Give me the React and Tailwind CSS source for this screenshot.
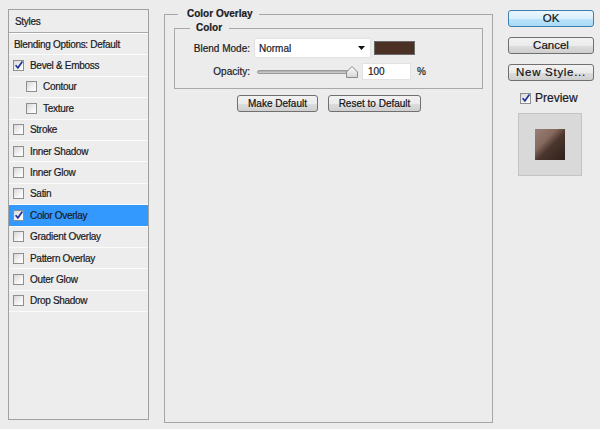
import React from "react";

const STYLE_ROWS = [
  { label: "Bevel & Emboss", checked: true },
  { label: "Contour", indent: true },
  { label: "Texture", indent: true },
  { label: "Stroke" },
  { label: "Inner Shadow" },
  { label: "Inner Glow" },
  { label: "Satin" },
  { label: "Color Overlay", checked: true, selected: true },
  { label: "Gradient Overlay" },
  { label: "Pattern Overlay" },
  { label: "Outer Glow" },
  { label: "Drop Shadow" },
];

function CheckBox({ checked }) {
  return (
    <span className="relative inline-block w-[11px] h-[11px] shrink-0 border border-[#8e8f8f] bg-[linear-gradient(135deg,#d6d6d6_0%,#f4f4f4_60%,#ffffff_100%)]">
      {checked && (
        <svg
          className="absolute left-[0px] top-[-1px]"
          width="10"
          height="10"
          viewBox="0 0 10 10"
        >
          <path
            d="M1.6 5.2 L3.9 7.8 L8.4 1.4"
            fill="none"
            stroke="#22349a"
            strokeWidth="1.7"
          />
        </svg>
      )}
    </span>
  );
}

function Button({ children, className = "", blue }) {
  return (
    <div
      className={
        "flex items-center justify-center rounded-[3px] border text-[#101010] " +
        (blue
          ? "border-[#3c7fb1] bg-[linear-gradient(#eaf6fd_0%,#d9f0fc_50%,#bee6fd_51%,#a7d9f5_100%)] "
          : "border-[#707070] bg-[linear-gradient(#f2f2f2_0%,#ebebeb_50%,#dddddd_51%,#cfcfcf_100%)] ") +
        className
      }
    >
      {children}
    </div>
  );
}

function StylesList() {
  return (
    <div className="ml-[8px] mt-[9px] w-[141px] h-[411px] border border-[#a0a0a0] bg-[#ededed] text-[10px] tracking-[-0.3px] text-[#1a1a24]">
      <div className="h-[23px] flex items-center pl-[6px] border-b border-[#a8a8a8] shadow-[0_1px_0_#ffffff]">
        Styles
      </div>
      <div className="h-[21.4px] flex items-center pl-[5px] border-b border-[#fbfbfb] mt-[1px]">
        Blending Options: Default
      </div>
      {STYLE_ROWS.map((row) => (
        <div
          key={row.label}
          className={
            "h-[21.4px] flex items-center gap-[6px] border-b border-[#fbfbfb] " +
            (row.indent ? "pl-[17px] " : "pl-[4px] ") +
            (row.selected ? "bg-[#3399ff]" : "")
          }
        >
          <CheckBox checked={row.checked} />
          <span>{row.label}</span>
        </div>
      ))}
    </div>
  );
}

function ColorOverlayPanel() {
  return (
    <fieldset className="ml-[15px] mt-[7px] w-[329px] h-[416px] border border-[#a6a6a6] text-[10px] text-[#1a1a24]">
      <legend className="ml-[13px] pl-[9px] pr-[6px] leading-[14px] font-bold">
        Color Overlay
      </legend>
      <fieldset className="mx-[9px] h-[68px] border border-[#a9a9a9]">
        <legend className="ml-[15px] pl-[6px] pr-[7px] leading-[14px] font-bold">
          Color
        </legend>
        <div className="flex items-center pt-[3px]">
          <div className="w-[75px] text-right">Blend Mode:</div>
          <div className="ml-[4px] w-[117px] h-[20px] flex items-center justify-between bg-white border border-[#e2e2e2] rounded-[2px] pl-[4px] pr-[5px]">
            <span>Normal</span>
            <svg width="7" height="4" viewBox="0 0 7 4">
              <path d="M0 0 H7 L3.5 4 Z" fill="#111" />
            </svg>
          </div>
          <div className="ml-[3px] w-[41px] h-[14px] bg-[#4a3124] border border-[#6a6a6a]" />
        </div>
        <div className="flex items-center mt-[5px]">
          <div className="w-[75px] text-right">Opacity:</div>
          <div className="relative ml-[7px] w-[100px] h-[17px] flex items-center">
            <div className="w-[98px] h-[4px] rounded-[2px] border border-[#9a9a9a] bg-[linear-gradient(#a8a8a8,#d0d0d0)]" />
            <svg
              className="absolute left-[89px] top-[3px]"
              width="12"
              height="12"
              viewBox="0 0 12 12"
            >
              <defs>
                <linearGradient id="thumb" x1="0" y1="0" x2="0" y2="1">
                  <stop offset="0" stopColor="#ffffff" />
                  <stop offset="1" stopColor="#d4d4d4" />
                </linearGradient>
              </defs>
              <path
                d="M6 0.5 L11.5 6 V11.5 H0.5 V6 Z"
                fill="url(#thumb)"
                stroke="#8a8a8a"
                strokeWidth="1"
              />
            </svg>
          </div>
          <div className="ml-[5px] w-[49px] h-[17px] bg-white border border-[#e2e2e2] flex items-center pl-[5px]">
            100
          </div>
          <span className="ml-[6px]">%</span>
        </div>
      </fieldset>
      <div className="flex gap-[10px] ml-[72px] mt-[6px]">
        <Button className="w-[81px] h-[17px]">Make Default</Button>
        <Button className="w-[93px] h-[17px]">Reset to Default</Button>
      </div>
    </fieldset>
  );
}

function SideButtons() {
  return (
    <div className="ml-[15px] mt-[10px] w-[86px] flex flex-col text-[11.5px]">
      <Button blue className="h-[17px]">
        OK
      </Button>
      <Button className="h-[17px] mt-[10px]">Cancel</Button>
      <Button className="h-[17px] mt-[10px] tracking-[0.7px]">
        New Style...
      </Button>
      <div className="flex items-center gap-[4px] mt-[8px] ml-[12px] text-[12px] text-[#1a1a24]">
        <CheckBox checked />
        <span>Preview</span>
      </div>
      <div className="ml-[10px] mt-[6px] w-[64px] h-[63px] bg-[#d9d9d9] border border-[#c4c4c4] flex items-center justify-center">
        <div className="w-[30px] h-[31px] bg-[linear-gradient(135deg,#9a8076_0%,#86695f_35%,#4a362d_55%,#2f211b_100%)]" />
      </div>
    </div>
  );
}

export default function App() {
  return (
    <div className="w-[600px] h-[429px] bg-[#ececec] flex items-start font-['Liberation_Sans',Arial,sans-serif] [-webkit-text-stroke:0.2px_#1a1a24]">
      <StylesList />
      <ColorOverlayPanel />
      <SideButtons />
    </div>
  );
}
